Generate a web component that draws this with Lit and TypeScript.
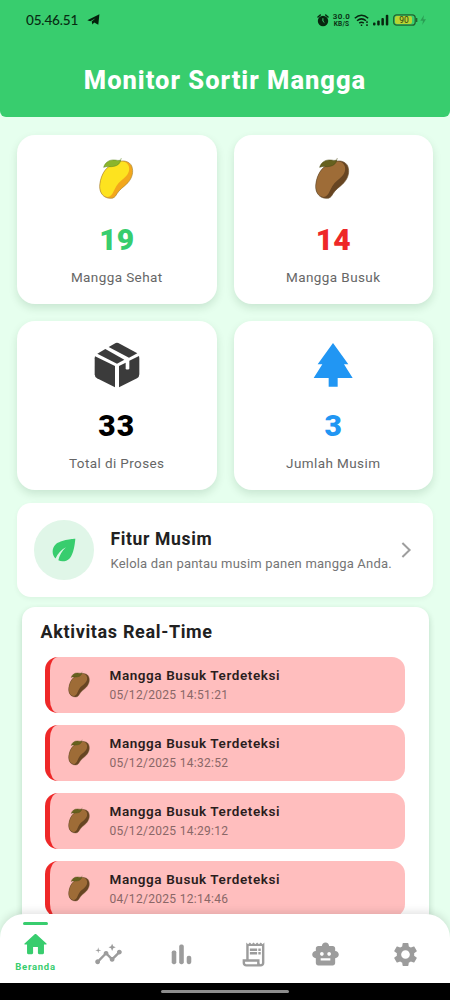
import { LitElement, html, css, svg } from "lit";
import { customElement, property } from "lit/decorators.js";

@customElement("mango-icon")
class MangoIcon extends LitElement {
  @property({ type: Boolean }) rotten = false;
  static styles = css`
    :host { display: block; width: 38.33px; height: 43.33px; margin-right: 2px; }
    :host([small]) { width: 24px; height: 27.2px; margin-right: 0; }
    svg { display: block; width: 100%; height: 100%; }
  `;
  render() {
    const c = this.rotten
      ? { body: "#9e6c37", shade: "#674522", leaf: "#66611f", vein: "#4b4916", line: "#6e5434" }
      : { body: "#fde31f", shade: "#f3a71c", leaf: "#8bb52c", vein: "#5f8a22", line: "#a8893a" };
    const outline = "M352 110C368 103 388 108 394 122C401 140 395 158 383 172C369 186 357 193 350 205C345 215 339 220 329 219C309 218 298 203 298 183C299 160 309 136 324 125C334 119 343 116 352 110Z";
    return html`<svg viewBox="290 95 115 130">
      <path d=${outline} fill=${c.shade} />
      <path d="M352 110C368 103 383 111 386 125C389 144 377 154 362 166C350 176 345 187 340 198C336 208 330 215 322 215C306 212 298 199 299 181C300 158 310 136 324 125Z" fill=${c.body} />
      <path d=${outline} fill="none" stroke=${c.line} stroke-width="2" />
      <path d="M310 126C314 112 326 103 341 104C349 104 354 107 361 104C360 114 352 121 341 123C329 126 320 121 310 126Z" fill=${c.leaf} stroke=${c.vein} stroke-width="1.6" />
      <path d="M361 104L363 98" fill="none" stroke=${c.vein} stroke-width="1.4" />
    </svg>`;
  }
}

const boxIcon = html`<svg class="stat-svg" viewBox="275 90 150 150" fill="#3b3b3b">
  <path d="M291 131L315 117L372 149L350 161Z" />
  <path d="M325 111L346 99Q350 97 354 99L411 130L386 143Z" />
  <path d="M284 139L344 168V232L290 205Q283 201 283 193V145Z" />
  <path d="M356 168L376 158V177Q382 181 387 176V152L416 138L417 145V193Q417 201 410 205L356 232Z" />
</svg>`;
const treeIcon = html`<svg class="stat-svg" viewBox="250 92 150 150" fill="#2196f3">
  <path d="M325 101L371 165H358L384 206H339V232H312V206H267L293 165H279Z" />
</svg>`;

const navIcons = [
  svg`<path d="M10 19v-5h4v5c0 .55.45 1 1 1h3c.55 0 1-.45 1-1v-7h1.7c.46 0 .68-.57.33-.87L12.67 3.6c-.38-.34-.96-.34-1.34 0l-8.36 7.53c-.34.3-.13.87.33.87H5v7c0 .55.45 1 1 1h3c.55 0 1-.45 1-1z"/>`,
  svg`<path d="M21 8c-1.45 0-2.26 1.44-1.93 2.51l-3.55 3.56c-.3-.09-.74-.09-1.04 0l-2.55-2.55C12.27 10.45 11.46 9 10 9c-1.45 0-2.27 1.44-1.93 2.52l-4.56 4.55C2.44 15.74 1 16.55 1 18c0 1.1.9 2 2 2 1.45 0 2.26-1.44 1.93-2.51l4.55-4.56c.3.09.74.09 1.04 0l2.55 2.55C12.73 16.55 13.54 18 15 18c1.45 0 2.27-1.44 1.93-2.52l3.56-3.55C21.56 12.26 23 11.45 23 10c0-1.1-.9-2-2-2z"/><path d="M15 9l.94-2.07L18 6l-2.06-.93L15 3l-.92 2.07L12 6l2.08.93zM3.5 11L4 9l2-.5L4 8l-.5-2L3 8l-2 .5L3 9z"/>`,
  svg`<rect x="3.9" y="8.7" width="3.8" height="11.3" rx="1.5"/><rect x="10.1" y="3.8" width="3.8" height="16.2" rx="1.5"/><rect x="16.3" y="13" width="3.8" height="7" rx="1.7"/>`,
  svg`<path d="M19.5 3.5L18 2l-1.5 1.5L15 2l-1.5 1.5L12 2l-1.5 1.5L9 2 7.5 3.5 6 2v14H3v3c0 1.66 1.34 3 3 3h12c1.66 0 3-1.34 3-3V2l-1.5 1.5zM15 20H6c-.55 0-1-.45-1-1v-1h10v2zm4-1c0 .55-.45 1-1 1s-1-.45-1-1v-3H8V5h11v14z"/><path d="M9 7h6v2H9zM16 7h2v2h-2zM9 10h6v2H9zM16 10h2v2h-2z"/>`,
  svg`<path d="M20 9V7c0-1.1-.9-2-2-2h-3c0-1.66-1.34-3-3-3S9 3.34 9 5H6c-1.1 0-2 .9-2 2v2c-1.66 0-3 1.34-3 3s1.34 3 3 3v4c0 1.1.9 2 2 2h12c1.1 0 2-.9 2-2v-4c1.66 0 3-1.34 3-3s-1.34-3-3-3zM7.5 11.5c0-.83.67-1.5 1.5-1.5s1.5.67 1.5 1.5S9.83 13 9 13s-1.5-.67-1.5-1.5zM16 17H8v-2h8v2zm-1-4c-.83 0-1.5-.67-1.5-1.5S14.17 10 15 10s1.5.67 1.5 1.5S15.83 13 15 13z"/>`,
  svg`<path d="M19.14 12.94c.04-.3.06-.61.06-.94 0-.32-.02-.64-.07-.94l2.03-1.58c.18-.14.23-.41.12-.61l-1.92-3.32c-.12-.22-.37-.29-.59-.22l-2.39.96c-.5-.38-1.03-.7-1.62-.94l-.36-2.54c-.04-.24-.24-.41-.48-.41h-3.84c-.24 0-.43.17-.47.41l-.36 2.54c-.59.24-1.13.57-1.62.94l-2.39-.96c-.22-.08-.47 0-.59.22L2.74 8.87c-.12.21-.08.47.12.61l2.03 1.58c-.05.3-.09.63-.09.94s.02.64.07.94l-2.03 1.58c-.18.14-.23.41-.12.61l1.92 3.32c.12.22.37.29.59.22l2.39-.96c.5.38 1.03.7 1.62.94l.36 2.54c.05.24.24.41.48.41h3.84c.24 0 .44-.17.47-.41l.36-2.54c.59-.24 1.13-.56 1.62-.94l2.39.96c.22.08.47 0 .59-.22l1.92-3.32c.12-.22.07-.47-.12-.61l-2.01-1.58zM12 15.6c-1.98 0-3.6-1.62-3.6-3.6s1.62-3.6 3.6-3.6 3.6 1.62 3.6 3.6-1.62 3.6-3.6 3.6z"/>`,
];

const stats = [
  { icon: html`<mango-icon></mango-icon>`, value: "19", label: "Mangga Sehat", tone: "green" },
  { icon: html`<mango-icon rotten></mango-icon>`, value: "14", label: "Mangga Busuk", tone: "red" },
  { icon: boxIcon, value: "33", label: "Total di Proses", tone: "black" },
  { icon: treeIcon, value: "3", label: "Jumlah Musim", tone: "blue" },
];

const events = ["05/12/2025 14:51:21", "05/12/2025 14:32:52", "05/12/2025 14:29:12", "04/12/2025 12:14:46"];

@customElement("app-root")
class AppRoot extends LitElement {
  static styles = css`
    :host {
      display: flex; flex-direction: column; width: 450px; height: 1000px; overflow: hidden;
      background: #e6ffee; font-family: Roboto, "Liberation Sans", sans-serif; color: #222;
    }
    * { box-sizing: border-box; }
    svg { display: block; flex: none; }
    header { flex: none; height: 117.4px; background: #38cd6e; border-radius: 0 0 6px 6px; }
    .status { display: flex; align-items: center; height: 40px; padding: 0 22px 0 26px; color: #08250f; }
    .clock { font: 500 13.5px/20px Lato, sans-serif; letter-spacing: -0.15px; width: 61px; color: #072b12; }
    .sys { display: flex; align-items: center; margin-left: auto; }
    .speed { width: 20px; margin: 0 2.5px; text-align: center; font-size: 8px; font-weight: 600; line-height: 7.5px; letter-spacing: 0.4px; }
    .speed div + div { font-size: 6.5px; line-height: 6.5px; letter-spacing: 0.2px; }
    .bars { margin-left: 3px; }
    .battery { margin-left: 4px; }
    h1 { margin: 19.5px 0 0; text-align: center; color: #fff; font-size: 25.5px; line-height: 40px; font-weight: 800; letter-spacing: 1px; }
    main { flex: 1; min-height: 0; padding: 17.3px 17px 0; }
    .grid { display: grid; grid-template-columns: 1fr 1fr; gap: 17px; }
    .stat {
      height: 169.3px; border-radius: 18px; background: #fff; padding-top: 19px;
      display: flex; flex-direction: column; align-items: center; box-shadow: 0 4px 8px rgba(0, 60, 20, 0.13);
    }
    .pic { height: 50px; display: grid; place-items: center; }
    .stat-svg { width: 50px; height: 50px; }
    .num { margin-top: 18.5px; font-size: 30px; font-weight: 900; line-height: 36px; }
    .green { color: #38cd6e; } .red { color: #ee2828; } .blue { color: #2196f3; }
    .black { color: #000; letter-spacing: 1.2px; }
    .label { margin-top: 9.5px; font-size: 13.5px; line-height: 18px; color: #666; letter-spacing: 0.4px; }
    .feature {
      margin-top: 12.6px; height: 94px; border-radius: 14px; background: #fff; padding: 0 17px;
      display: flex; align-items: center; box-shadow: 0 2px 5px rgba(0, 60, 20, 0.05);
    }
    .leaf { width: 59.5px; height: 59.5px; border-radius: 50%; background: #e0f6e8; display: grid; place-items: center; margin-right: 17px; flex: none; }
    .copy { flex: 1; white-space: nowrap; }
    .feature .copy { padding-top: 1.5px; }
    h2 { margin: 0; font-size: 17.5px; font-weight: 700; line-height: 24px; letter-spacing: 0.65px; color: #212121; }
    .sub { margin-top: 2px; font-size: 13px; line-height: 22px; color: #757575; letter-spacing: 0.2px; }
    .activity {
      margin: 10.3px 4.5px 0; height: 400px; border-radius: 13px; background: #fff; padding: 13px 23.5px 0 23px;
      box-shadow: 0 3px 6px rgba(0, 60, 30, 0.2);
    }
    .activity h2 { margin-left: -4px; margin-bottom: 13.2px; font-size: 18px; letter-spacing: 0.65px; }
    .list { display: grid; gap: 12.6px; }
    .event {
      height: 55.4px; border-radius: 13px; border-left: 5px solid #ee2828; background: #ffbebe;
      display: flex; align-items: center; padding-left: 17px;
    }
    .event .copy { margin-left: 19px; }
    .name { font-size: 13.5px; font-weight: 600; line-height: 20px; color: #2a1d1d; letter-spacing: 0.58px; }
    .date { font-size: 12px; line-height: 21px; color: #8a6767; letter-spacing: 0.3px; }
    nav {
      position: relative; flex: none; height: 69px; margin-top: -26px; background: #fff;
      border-radius: 24px 24px 0 0; box-shadow: 0 -2px 8px rgba(0, 0, 0, 0.12);
      display: grid; grid-template-columns: 71px 75px 71px 72px 72px 89px;
    }
    .tab { display: flex; flex-direction: column; align-items: center; color: #9c9c9c; padding-top: 26px; }
    .tab.on { color: #38cd6e; padding-top: 7.5px; }
    .tab svg { width: 29px; height: 29px; fill: currentColor; }
    .mark { width: 25px; height: 3px; border-radius: 1.5px; background: #38cd6e; margin-bottom: 5px; }
    .tabname { font-size: 9.5px; font-weight: 700; line-height: 12px; margin-top: 2px; letter-spacing: 0.75px; }
    .home-bar { flex: none; height: 17px; background: #000; display: grid; justify-content: center; padding-top: 6.5px; }
    .pill { width: 128px; height: 3px; border-radius: 2px; background: #8c8c8c; }
  `;

  render() {
    return html`
      <header>
        <div class="status">
          <span class="clock">05.46.51</span>
          <svg width="13" height="12" viewBox="0 0 13 12"><path d="M0.3 6.2L12.4 0.3L11.3 10.7L7.2 8.6L5.4 10.6L4.7 7.5L8.6 4.2L3.3 7.2Z" fill="#04200c" /></svg>
          <div class="sys">
            <svg width="12" height="13" viewBox="0 0 12 13"><circle cx="6" cy="7" r="5.2" fill="#08250f" /><path d="M1 3L3.3 1M11 3L8.7 1" stroke="#08250f" stroke-width="1.5" stroke-linecap="round" /><path d="M5.9 4.2V7.2L7.4 8.6" stroke="#38cd6e" fill="none" /></svg>
            <div class="speed"><div>30.0</div><div>KB/S</div></div>
            <svg width="16" height="13" viewBox="0 0 16 13" fill="none" stroke="#08250f" stroke-width="1.5"><path d="M0.8 4.3Q7.5 -1.8 14.2 4.3M3 6.8Q7.5 3 12 6.8M5.2 9.1Q7.5 7.4 9.8 9.1" /><path d="M7.5 10.5V12M13 7.2V9M13 10.2V12" /></svg>
            <svg class="bars" width="16" height="12" viewBox="0 0 16 12" fill="#08250f"><rect y="8.5" width="2.5" height="3" rx="1" /><rect x="4.2" y="6.5" width="2.5" height="5" rx="1" /><rect x="8.4" y="4" width="2.5" height="7.5" rx="1" /><rect x="12.8" y="0.8" width="2.5" height="10.7" rx="1" /></svg>
            <svg class="battery" width="35" height="12" viewBox="0 0 35 12"><rect x="0.7" y="0.8" width="21.5" height="10.4" rx="3" fill="#38cd6e" stroke="#23642f" stroke-width="1.3" /><rect x="2" y="2" width="17" height="8" rx="2" fill="#b7d433" /><path d="M23.6 4V8" stroke="#23642f" stroke-width="1.5" /><text x="11" y="9.1" font-size="8.5" font-family="Roboto" text-anchor="middle" fill="#2b3d12">90</text><path d="M31 1L27.3 6.8H30L29.2 11L33 5.2H30.3Z" fill="#2a9e54" /></svg>
          </div>
        </div>
        <h1>Monitor Sortir Mangga</h1>
      </header>
      <main>
        <div class="grid">
          ${stats.map((s) => html`<section class="stat">
            <div class="pic">${s.icon}</div>
            <div class="num ${s.tone}">${s.value}</div>
            <div class="label">${s.label}</div>
          </section>`)}
        </div>
        <section class="feature">
          <div class="leaf"><svg width="34" height="34" viewBox="0 0 24 24" fill="#38cd6e"><path d="M6.05 8.05c-2.73 2.73-2.73 7.15-.02 9.88 1.47-3.4 4.09-6.24 7.36-7.93-2.77 2.34-4.71 5.61-5.39 9.32 2.6 1.23 5.8.78 7.95-1.37C19.43 14.47 20 4 20 4S9.53 4.57 6.05 8.05z" /></svg></div>
          <div class="copy">
            <h2>Fitur Musim</h2>
            <div class="sub">Kelola dan pantau musim panen mangga Anda.</div>
          </div>
          <svg width="16" height="18" viewBox="0 0 16 18"><path d="M2.4 2L9.6 9L2.4 16" fill="none" stroke="#9e9e9e" stroke-width="2" /></svg>
        </section>
        <section class="activity">
          <h2>Aktivitas Real-Time</h2>
          <div class="list">
            ${events.map((d) => html`<div class="event">
              <mango-icon rotten small></mango-icon>
              <div class="copy"><div class="name">Mangga Busuk Terdeteksi</div><div class="date">${d}</div></div>
            </div>`)}
          </div>
        </section>
      </main>
      <nav>
        ${navIcons.map((p, i) => html`<div class="tab ${i === 0 ? "on" : ""}">
          ${i === 0 ? html`<div class="mark"></div>` : ""}
          <svg viewBox="0 0 24 24">${p}</svg>
          ${i === 0 ? html`<div class="tabname">Beranda</div>` : ""}
        </div>`)}
      </nav>
      <div class="home-bar"><div class="pill"></div></div>
    `;
  }
}
